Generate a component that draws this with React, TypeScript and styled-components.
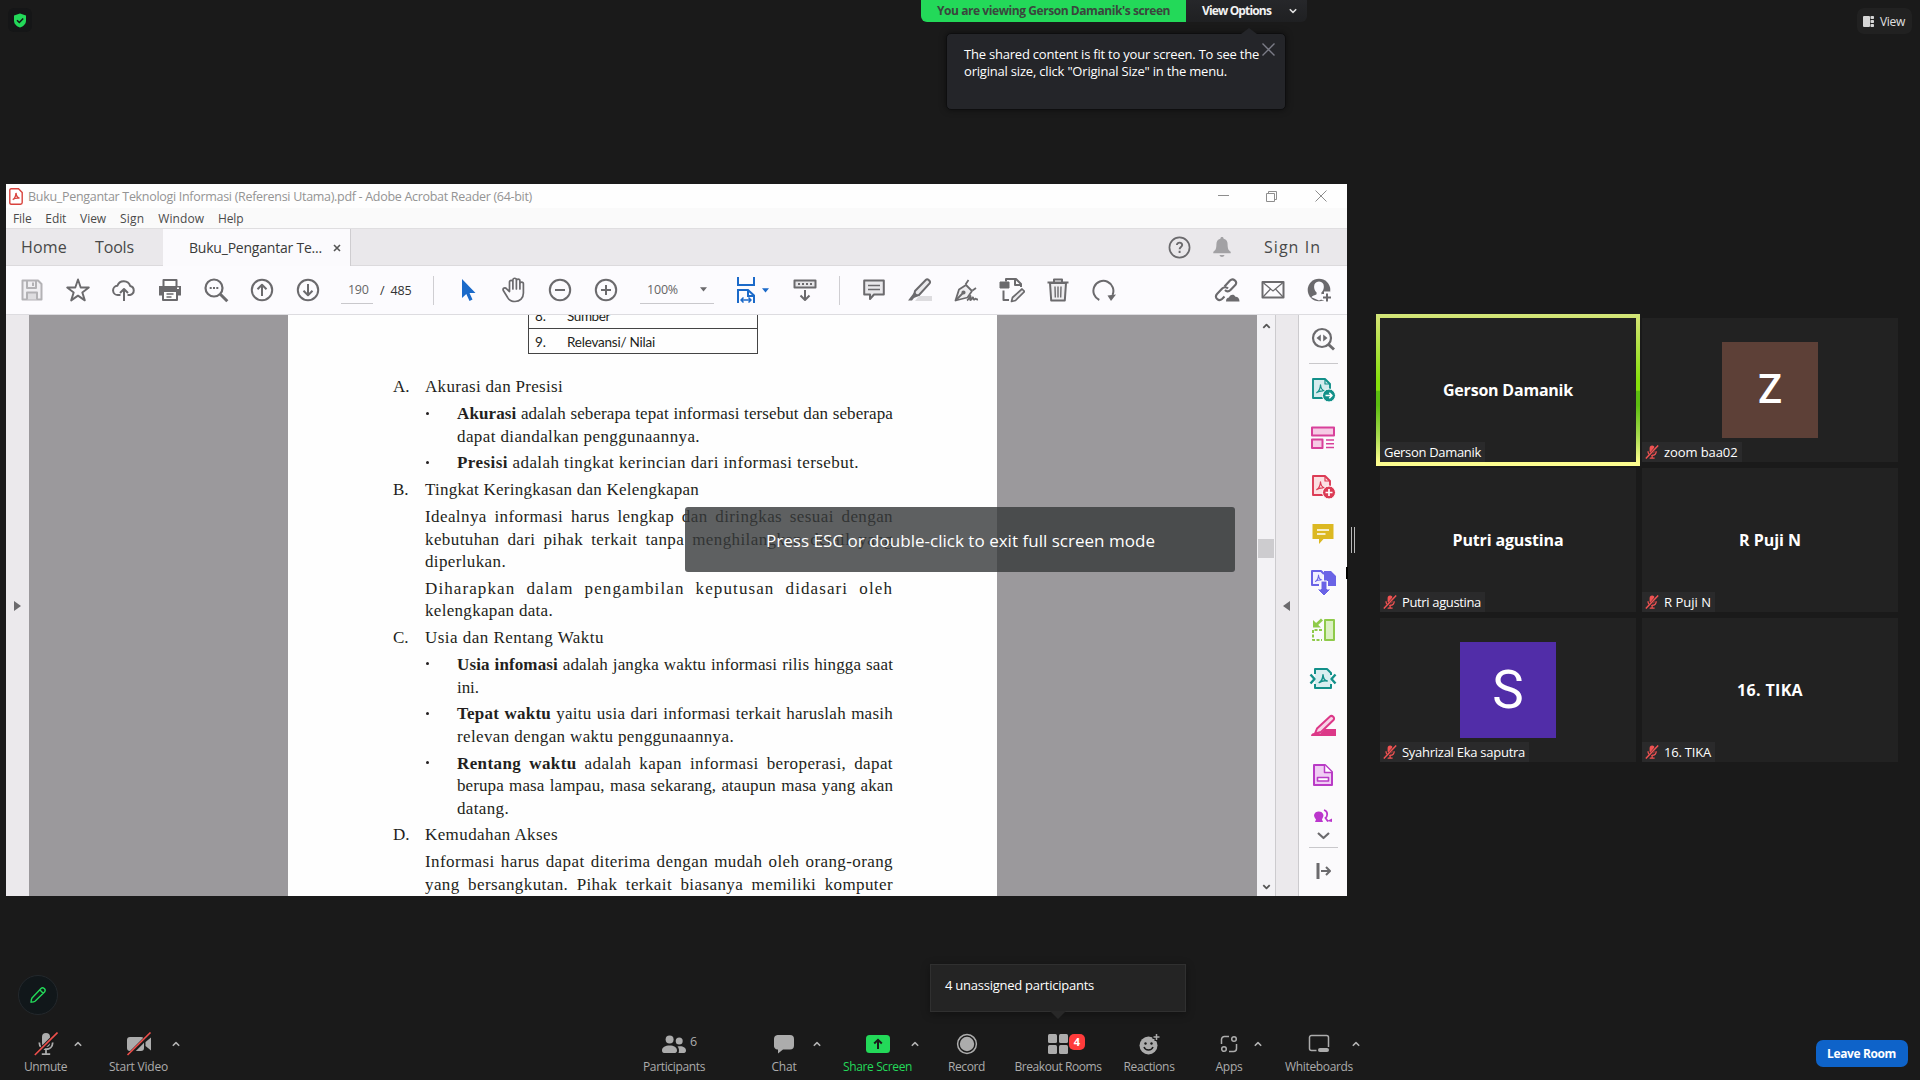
import React, { useLayoutEffect, useRef, useState } from "react";
import styled, { createGlobalStyle, css } from "styled-components";

const UI = `"Open Sans", "Noto Sans", sans-serif`;
const SERIF = `"Liberation Serif", serif`;

const Global = createGlobalStyle`
  *, *::before, *::after { box-sizing: border-box; }
  html, body { margin: 0; padding: 0; background: #1a1a1a; }
  body { font-family: ${UI}; overflow: hidden; }
  svg { display: block; flex: none; }
`;

/* ---------- text that settles to a given width ---------- */

const FitSpan = styled.span`
  display: inline-block;
  justify-self: start;
  white-space: nowrap;
`;

function Fit({ w, children }: { w: number; children: React.ReactNode }) {
  const ref = useRef<HTMLSpanElement>(null);
  const [spacing, setSpacing] = useState(0);
  useLayoutEffect(() => {
    const el = ref.current;
    if (!el) return;
    el.style.letterSpacing = "0px";
    const n = (el.textContent || "").length;
    setSpacing((w - el.getBoundingClientRect().width) / Math.max(1, n));
  }, [w]);
  return (
    <FitSpan ref={ref} style={{ letterSpacing: `${spacing}px` }}>
      {children}
    </FitSpan>
  );
}

/* ---------- page ---------- */

const Screen = styled.div`
  position: relative;
  width: 1920px;
  height: 1080px;
  overflow: hidden;
  background: #1a1a1a;
  display: grid;
  grid-template-rows: 184px 712px 184px;
`;

const TopArea = styled.header`
  display: flex;
  justify-content: space-between;
  padding: 8px;
`;

const ShieldBadge = styled.div`
  width: 24px;
  height: 24px;
  border-radius: 6px;
  background: #151617;
  display: grid;
  place-items: center;
`;

const ViewButton = styled.div`
  height: 26px;
  width: 55px;
  border-radius: 7px;
  background: #212121;
  color: #e0e0e0;
  font-size: 12px;
  display: flex;
  align-items: center;
  padding-left: 6px;
  gap: 6px;
`;

const Middle = styled.main`
  display: flex;
  padding-left: 6px;
`;

/* ---------- share banner ---------- */

const Banner = styled.div`
  position: absolute;
  left: 921px;
  top: 0;
  height: 22px;
  width: 386px;
  display: flex;
  border-radius: 0 0 6px 6px;
  overflow: hidden;
  font-size: 12px;
  font-weight: 700;
`;

const BannerName = styled.div`
  width: 265px;
  padding-bottom: 1px;
  background: #23d959;
  color: #3a463d;
  display: flex;
  justify-content: center;
  align-items: center;
`;

const BannerOptions = styled.div`
  flex: 1;
  display: flex;
  align-items: center;
  justify-content: space-between;
  padding: 0 10px 1px 16px;
  color: #f2f2f2;
  background: linear-gradient(#26272a, #1f2022);
`;

const HintBox = styled.div`
  position: absolute;
  left: 946px;
  top: 33px;
  width: 340px;
  height: 77px;
  padding: 12px 0 0 17px;
  border: 1px solid #0e0e0f;
  border-radius: 5px;
  background: #242529;
  color: #fff;
  font-size: 13px;
  line-height: 17px;
  box-shadow: 0 0 6px rgba(0, 0, 0, 0.5);
  &::before {
    content: "";
    position: absolute;
    left: 294px;
    top: -6px;
    border: 8px solid transparent;
    border-top: 0;
    border-bottom: 6px solid #242529;
  }
  & > svg {
    position: absolute;
    right: 10px;
    top: 9px;
  }
`;

/* ---------- acrobat window ---------- */

const Window = styled.section`
  width: 1341px;
  height: 712px;
  background: #fbfafd;
  display: grid;
  grid-template-rows: 24px 21px 37px 49px 581px;
`;

const TitleBar = styled.div`
  display: flex;
  align-items: center;
  background: #fefefe;
  color: #949494;
  font-size: 12.5px;
  padding: 0 20px 0 3px;
  gap: 5px;
`;

const Controls = styled.div`
  margin-left: auto;
  display: flex;
  align-items: center;
  gap: 37px;
`;

const MenuBar = styled.div`
  display: flex;
  align-items: center;
  background: #fafafa;
  border-bottom: 1px solid #dfdee0;
  color: #4a4a4a;
  font-size: 12px;
  padding-left: 7px;
  gap: 13.8px;
`;

const TabBar = styled.div`
  display: flex;
  background: #eae8eb;
  border-bottom: 1px solid #dcdadd;
  color: #484848;
  font-size: 16px;
`;

const TabHome = styled.div`
  width: 157px;
  padding-left: 15px;
  display: flex;
  align-items: center;
  gap: 28px;
`;

const DocTab = styled.div`
  width: 188px;
  margin-bottom: -1px;
  background: #fbfafd;
  border-right: 1px solid #cfcdd0;
  color: #3a3a3a;
  font-size: 14px;
  display: flex;
  align-items: center;
  padding: 0 9px 0 26px;
  justify-content: space-between;
`;

const TabRight = styled.div`
  margin-left: auto;
  display: flex;
  align-items: center;
  padding-right: 26px;
  & > svg { margin-right: 22px; }
  & > svg + svg { margin-right: 33px; }
`;

const ToolBar = styled.div`
  display: flex;
  align-items: center;
  background: #fcfbfe;
  border-bottom: 1px solid #dddce0;
  padding: 0 5px 0 3px;
`;

const Cell = styled.div`
  width: 46px;
  height: 46px;
  flex: none;
  display: grid;
  place-items: center;
`;

const Separator = styled.div<{ before: number; after: number }>`
  width: 1px;
  height: 29px;
  background: #cfced2;
  margin: 0 ${(p) => p.after}px 0 ${(p) => p.before}px;
`;

const PageBox = styled.div`
  width: 102px;
  display: flex;
  align-items: center;
  padding-left: 10px;
  font-size: 12.5px;
  color: #333;
`;

const FieldBox = styled.div<{ w: number }>`
  width: ${(p) => p.w}px;
  height: 28px;
  border-bottom: 1px solid #c9c8cc;
  display: flex;
  align-items: center;
  justify-content: space-between;
  padding: 0 7px;
  color: #666;
  font-size: 12.5px;
`;

const Slash = styled.span`
  margin: 0 6px 0 7px;
`;

const ZoomBox = styled.div`
  width: 94px;
  padding-left: 11px;
`;

const FitCell = styled.div`
  width: 59px;
  display: flex;
  align-items: center;
  gap: 7px;
  padding-left: 14px;
`;

const Spacer = styled.div`
  flex: 1;
`;

const Body = styled.div`
  display: flex;
  height: 581px;
  overflow: hidden;
`;

const NavStrip = styled.div`
  width: 23px;
  background: #ebe9ec;
  display: grid;
  place-items: center;
`;

const Canvas = styled.div`
  width: 1228px;
  background: #9b999c;
  display: flex;
  padding-left: 259px;
`;

const Paper = styled.article`
  width: 709px;
  height: 581px;
  overflow: hidden;
  background: #fefefe;
  color: #231f20;
  font-family: ${SERIF};
  font-size: 17px;
  line-height: 22.6px;
`;

const Table = styled.div`
  width: 230px;
  height: 39px;
  margin: 0 0 0 240px;
  border: 1px solid #444;
  border-top: 0;
  overflow: hidden;
  display: flex;
  flex-direction: column;
  justify-content: flex-end;
  font-family: Lato, sans-serif;
  font-size: 13.5px;
  line-height: 27px;
`;

const TableRow = styled.div<{ ruled?: boolean }>`
  flex: none;
  height: 25px;
  padding-left: 6px;
  display: grid;
  grid-template-columns: 32px 1fr;
  ${(p) => p.ruled && css`border-top: 1px solid #444;`}
`;

const Prose = styled.div`
  width: 500px;
  margin: 22.4px 0 0 105px;
`;

const Section = styled.div`
  display: grid;
  grid-template-columns: 32px 468px;
  height: 22.6px;
  margin-top: 4.15px;
`;

const Para = styled.div`
  margin: 4.15px 0 0 32px;
`;

const Bullet = styled.div`
  display: grid;
  grid-template-columns: 32px 436px;
  margin: 4.15px 0 0 32px;
`;

const Dot = styled.i`
  width: 3px;
  height: 3px;
  border-radius: 50%;
  background: #231f20;
  margin: 8.5px 0 0 1px;
`;

const Line = styled.div<{ ls: number }>`
  height: 22.6px;
  white-space: nowrap;
  text-align: justify;
  text-align-last: justify;
  letter-spacing: ${(p) => p.ls}px;
`;

const Plain = styled.div`
  height: 22.6px;
`;

const ScrollTrack = styled.div`
  width: 19px;
  background: #f3f2f5;
  border-right: 1px solid #cccbce;
  display: flex;
  flex-direction: column;
  align-items: center;
  padding: 8px 0 6px;
`;

const Thumb = styled.div`
  width: 16px;
  height: 19px;
  margin: 210px 0 auto;
  background: #cdcccf;
`;

const Collapse = styled.div`
  width: 23px;
  padding-right: 2px;
  background: #ebe9ec;
  border-right: 1px solid #cccbce;
  display: grid;
  place-items: center;
`;

const Rail = styled.aside`
  width: 48px;
  background: #fbfafc;
  display: flex;
  flex-direction: column;
  align-items: center;
`;

const RailCell = styled.div<{ h?: number }>`
  height: ${(p) => p.h ?? 48.2}px;
  flex: none;
  display: grid;
  place-items: center;
`;

const RailRule = styled.div<{ top?: number }>`
  width: 29px;
  height: 1px;
  flex: none;
  margin-top: ${(p) => p.top ?? 0}px;
  background: #c9c8cb;
`;

/* ---------- splitter ---------- */

const Splitter = styled.div`
  width: 29px;
  padding: 343px 0 0 4px;
  display: flex;
  gap: 2px;
`;

const Grip = styled.i`
  width: 1px;
  height: 26px;
  background: #b9b9b9;
`;

const PointerEdge = styled.i`
  position: absolute;
  left: 1346px;
  top: 567px;
  width: 2px;
  height: 12px;
  background: #000;
`;

/* ---------- gallery ---------- */

const Gallery = styled.section`
  display: grid;
  grid-template-columns: 256px 256px;
  grid-auto-rows: 144px;
  gap: 6px;
  padding: 134px 0 0 4px;
`;

const Tile = styled.div`
  position: relative;
  background: #222222;
  color: #fff;
  display: grid;
  place-items: center;
  font-size: 16px;
  font-weight: 700;
`;

const ActiveFrame = styled.div`
  position: absolute;
  inset: -4px;
  padding: 4px;
  background: linear-gradient(#d3e57a 0%, #cfe36b 5%, #86e00c 44%, #86e00c 50%, #5cbd10 51%, #5cbd10 60%, #a6d94d 80%, #fbfc8c 97%, #ffff93 100%);
  &::after {
    content: "";
    display: block;
    height: 100%;
    background: #222222;
  }
`;

const TileName = styled.div`
  position: relative;
`;

const Avatar = styled.div<{ tint: string; weight: number; size: number }>`
  width: 96px;
  height: 96px;
  background: ${(p) => p.tint};
  display: grid;
  place-items: center;
  font: ${(p) => p.weight} ${(p) => p.size}px/1 Roboto, sans-serif;
`;

const NameTag = styled.div`
  position: absolute;
  left: 0;
  bottom: 0;
  height: 20px;
  display: flex;
  align-items: center;
  gap: 5px;
  padding: 0 4px;
  background: #2a2a2b;
  font-size: 13px;
  font-weight: 400;
  & > svg { margin-left: -1px; }
`;

/* ---------- overlays ---------- */

const Toast = styled.div`
  position: absolute;
  left: 685px;
  top: 507px;
  width: 550px;
  height: 65px;
  padding: 1px 0 0 1px;
  border-radius: 3px;
  background: rgba(54, 56, 58, 0.8);
  color: #fff;
  font-size: 17px;
  display: flex;
  align-items: center;
  justify-content: center;
`;

const PencilButton = styled.div`
  position: absolute;
  left: 18px;
  top: 975px;
  width: 40px;
  height: 40px;
  border-radius: 50%;
  border: 1px solid #23282c;
  background: #11171a;
  display: grid;
  place-items: center;
`;

const RoomsHint = styled.div`
  position: absolute;
  left: 930px;
  top: 964px;
  width: 256px;
  height: 48px;
  background: #242424;
  border: 1px solid #303030;
  color: #fff;
  font-size: 13px;
  padding: 11px 0 0 14px;
  box-shadow: 0 2px 8px rgba(0, 0, 0, 0.35);
  &::after {
    content: "";
    position: absolute;
    left: 119px;
    top: 46px;
    border: 8px solid transparent;
    border-bottom: 0;
    border-top-color: #282828;
  }
`;

/* ---------- meeting bar ---------- */

const MeetingBar = styled.footer`
  display: flex;
  align-items: flex-start;
  padding: 136px 12px 0 16px;
`;

const Tool = styled.div<{ w: number; gap?: number; green?: boolean }>`
  position: relative;
  flex: none;
  width: ${(p) => p.w}px;
  margin-left: ${(p) => p.gap ?? 0}px;
  display: flex;
  flex-direction: column;
  align-items: center;
  color: ${(p) => (p.green ? "#23d959" : "#acacac")};
  font-size: 12px;
  line-height: 18px;
`;

const ToolIcon = styled.div`
  position: relative;
  height: 24px;
  display: grid;
  place-items: center;
  margin-bottom: 2px;
`;

const CaretSpot = styled.div<{ dx: number }>`
  position: absolute;
  left: calc(50% + ${(p) => p.dx - 4}px);
  top: 9px;
`;

const Count = styled.span`
  position: absolute;
  left: 28px;
  top: 1px;
  font-size: 12.5px;
`;

const Badge = styled.span`
  position: absolute;
  left: 21px;
  top: 2px;
  width: 16px;
  height: 16px;
  border-radius: 5px;
  background: #ff3b3b;
  color: #fff;
  font-size: 11px;
  font-weight: 700;
  line-height: 15px;
  text-align: center;
`;

const LeaveButton = styled.div`
  margin: 8px 0 0 auto;
  width: 92px;
  height: 27px;
  border-radius: 7px;
  background: #0e63c9;
  color: #fff;
  font-size: 12px;
  font-weight: 700;
  display: flex;
  align-items: center;
  justify-content: center;
  padding: 0 1px 1px 0;
`;

/* ---------- icons ---------- */

const G = "#6b6a6d";

type SvgProps = { w?: number; h?: number; box?: string; c?: string; sw?: number; children: React.ReactNode };
const Svg = ({ w = 24, h, box = "0 0 24 24", c = G, sw = 2, children }: SvgProps) => (
  <svg width={w} height={h ?? w} viewBox={box} fill="none" stroke={c} strokeWidth={sw} strokeLinecap="butt" strokeLinejoin="round">
    {children}
  </svg>
);

const Down = ({ c = G }: { c?: string }) => (
  <svg width="7" height="5" viewBox="0 0 7 5"><path d="M0 .3h7L3.5 4.6z" fill={c} /></svg>
);

const Chevron = ({ up, c = "#b5b5b5" }: { up?: boolean; c?: string }) => (
  <Svg w={8} h={6} box="0 0 8 6" c={c} sw={1.5}><path d={up ? "M.8 4.8 4 1.6l3.2 3.2" : "M.8 1.2 4 4.4l3.2-3.2"} /></Svg>
);

const MutedMic = () => (
  <svg width="14" height="14" viewBox="0 0 14 14">
    <rect x="4.6" y=".4" width="5" height="8.2" rx="2.5" fill="#f05252" />
    <path d="M3 6.2c0 5.4 8.2 5.4 8.2 0M7.1 10.4v2.4M4.6 13.2h5" stroke="#f05252" strokeWidth="1.3" fill="none" />
    <path d="M1.8 13.6 12.8.4" stroke="#2a2a2b" strokeWidth="2.6" />
    <path d="M.8 13.6 13.2.4" stroke="#f05252" strokeWidth="1.4" />
  </svg>
);

/* the three-lobed loop of the Acrobat mark */
const Tri = "M-3.8 3.6C-1.6 2.4-.2-.6 0-4.2.3-.8 1.6 1.6 4.2 2 1 1.6-2 2.2-3.8 3.6z";

const fileTools = [
  <Svg key="save" c="#b3b2b5" w={22} box="0 0 22 22"><path d="M2 1.5h15l3.500 3.500v15.500H1.500V1.500z" fill="#f0eff2" /><path d="M6 2v7h9V2M12 3.500v3.500" /><path d="M6 20.500v-7h10v7" fill="#dedde0" /></Svg>,
  <Svg key="star" w={26} box="0 0 26 26" sw={1.900}><path d="M13 2.500l2.700 8h8.100l-6.500 4.900 2.500 8L13 18.600l-6.800 4.800 2.500-8-6.500-4.900h8.100z" /></Svg>,
  <Svg key="cloud" w={24}><path d="M8.500 17H6a4.600 4.600 0 0 1-.6-9.200A6.700 6.700 0 0 1 18.200 8 4.600 4.600 0 0 1 18 17h-2.500M12 23V11.500M8 15l4-4 4 4" /></Svg>,
  <Svg key="print" w={24}><path d="M5.500 8V2h13v6" fill="#fff" /><path d="M1 8h22v9.500H1z" fill={G} stroke="none" /><path d="M5 13h14v9H5z" fill="#fff" /><path d="M8.500 16h7M8.500 19h5" strokeWidth="1.400" /><path d="M19 10.200h2" stroke="#fff" strokeWidth="1.500" /></Svg>,
  <Svg key="find" w={25} box="0 0 25 25" sw={2.200}><circle cx="10" cy="10" r="8.500" /><path d="M16.300 16.300l7 7" strokeWidth="3" /><path d="M5.700 10h2M9 10h2M12.300 10h2" /></Svg>,
  <Svg key="up" w={24}><circle cx="12" cy="12" r="10.200" /><path d="M12 18V7M7.500 11.300 12 6.800l4.500 4.500" /></Svg>,
  <Svg key="down" w={24}><circle cx="12" cy="12" r="10.200" /><path d="M12 6v11M7.500 12.700l4.500 4.500 4.500-4.500" /></Svg>,
];

const viewTools = [
  <svg key="cursor" width="16" height="24" viewBox="0 0 16 24"><path d="M2 1v19l4.300-4L9.500 23l3-1.400-3-6.600H15.500z" fill="#1b6ac9" /></svg>,
  <Svg key="hand" w={26} box="0 0 26 26" sw={1.700}><path d="M8.500 14.500V5a1.700 1.700 0 0 1 3.400 0v7V3a1.700 1.700 0 0 1 3.500 0v9V3.800a1.700 1.700 0 0 1 3.500 0V12 6.800a1.700 1.700 0 0 1 3.500 0V16c0 5-3.400 8.500-8.400 8.500-4 0-6-1.500-7.500-4.200L2.300 13.500c-1-2.300 1.800-3.500 3.300-1.600z" /></Svg>,
  <Svg key="minus" w={24}><circle cx="12" cy="12" r="10.200" /><path d="M7 12h10" /></Svg>,
  <Svg key="plus" w={24}><circle cx="12" cy="12" r="10.200" /><path d="M7 12h10M12 7v10" /></Svg>,
];

const FitIcon = () => (
  <Svg w={18} h={26} box="0 0 18 26" c="#1b6ac9">
    <path d="M1 0v8h16V0M1 26V13h10l6 5.500V26M11 13v6h6" strokeLinejoin="miter" />
    <path d="M4 23h10M6.500 20.500 4 23l2.500 2.500M11.500 20.500 14 23l-2.500 2.500" strokeWidth="1.500" />
  </Svg>
);

const Keyboard = () => (
  <Svg w={24} h={24}><path d="M1.500 2.500h21v7h-21z" fill="#e6e5e8" /><path d="M5 6h2M9 6h2M13 6h2M17 6h2" /><path d="M12 12v9M7.500 17.500 12 22l4.500-4.500" /></Svg>
);

const markupTools = [
  <Svg key="note" w={22} box="0 0 22 22"><path d="M1.200 1.500h19.600v14H11l-4 4.500v-4.500H1.200z" fill="#e9e8eb" /><path d="M5 6.500h12M5 10.500h12" strokeWidth="1.500" /></Svg>,
  <Svg key="hl" w={26} box="0 0 26 26"><path d="M12 19h13v5H8z" fill="#dddcdf" stroke="none" /><path d="M8 14 19 2.800c1.500-1.500 5.200 1.500 3.600 3.600L12 18l-5 .8z" fill="#e9e8eb" /><path d="M7.500 15l4 4-4.500 2-2 2.500H1z" fill={G} stroke="none" /></Svg>,
  <Svg key="pen" w={26} box="0 0 26 26" sw={1.800}><path d="M2.500 23.500 6 12.500l7-4.500 6 6-4.500 6.500z" fill="#eeedf0" /><path d="M2.500 23.500l7-7" /><circle cx="10.500" cy="15.500" r="1.200" fill={G} /><path d="M12.500 7.500 15.500 3M19.500 13.500 23 11" /><path d="M14 23.500c2-1 3-5 3.500-4.500s-1 4 0 4 2-3 2.500-2.500 0 2 .8 2.200 1.200-1.200 1.800-1 .8 1 2.400.8" /></Svg>,
  <Svg key="edit" w={26} box="0 0 26 26"><path d="M7 4.500V2h10l5 5v3M16 2v6h6M4.500 13.500V23H10" /><path d="M1 5h9v6H1z" fill={G} stroke={G} strokeWidth="1" /><path d="M12.500 24.500l1-4 9.500-8.500 2.500 2.500-9 9z" fill="#e9e8eb" strokeWidth="1.700" /></Svg>,
  <Svg key="trash" w={24}><path d="M1.500 4.500h21M8 4V1.500h8V4" /><path d="M4 5l1.200 17.500h13.600L20 5z" fill="#eeedf0" /><path d="M9 8.500l.3 11M12 8.500v11M15 8.500l-.3 11" strokeWidth="1.400" /></Svg>,
  <Svg key="rot" w={24}><path d="M7.300 22A10 10 0 1 1 20.500 17" /><path d="M15.500 17.500l8.500-1-5 6.500z" fill={G} stroke="none" /></Svg>,
];

const shareTools = [
  <Svg key="link" w={26} box="0 0 26 26" sw={2.100}><path d="M10.500 9.500l5.500-6c3-3 8 1 5.300 4.600L16.500 13c-2 2-4 1.600-5.500 0" /><path d="M14 11.500c-1.700-2-4.300-1.500-5.800 0L3 17c-3 3.500 1.700 8 5 5l2.500-2.500" /><path d="M12 24.500c0-3 1.500-4 3-4 .5-3 5-4.200 6.500-.8 2.500 0 4 1.500 4 4.800z" fill={G} stroke="none" /></Svg>,
  <Svg key="mail" w={24} h={20} box="0 0 24 20"><path d="M1.500 2h21v15.500h-21z" /><path d="M2 2.500l10 8.500 10-8.500M2 17l7.500-8M22 17l-7.500-8" strokeWidth="1.200" /></Svg>,
  <svg key="user" width="25" height="25" viewBox="0 0 25 25"><circle cx="12" cy="12" r="11.300" fill={G} /><path d="M12 3.500c6.500 0 5.700 8.700 2.400 11v1.800c1.500 1 4.600 1.200 5.200 3L12 22.600l-7.600-3.300c.6-1.800 3.700-2 5.200-3v-1.800C6.300 12.200 5.500 3.500 12 3.500z" fill="#fcfbfe" /><path d="M20 13.500v11M14.500 19h11" stroke="#fcfbfe" strokeWidth="6" /><path d="M20 15.500v8M16 19.500h8" stroke={G} strokeWidth="2" /></svg>,
];

const Doc = ({ c, f, children }: { c: string; f: string; children?: React.ReactNode }) => (
  <Svg w={26} box="0 0 26 26" c={c} sw={1.900}>
    <path d="M3 3h12l5 5v14H3z" fill={f} /><path d="M15 3v5h5" strokeWidth="1.200" />
    <path d={Tri} transform="translate(10.500 13)" strokeWidth="1.200" />
    {children}
  </Svg>
);

const railIcons = [
  <Doc key="exp" c="#13908a" f="#d5ecee"><circle cx="19" cy="19.500" r="6.500" fill="#13908a" stroke="#fff" strokeWidth="1" /><path d="M15.500 19.500h6M19.300 16.800l2.700 2.700-2.700 2.700" stroke="#fff" strokeWidth="1.600" /></Doc>,
  <Svg key="org" w={26} box="0 0 26 26" c="#d8409a"><path d="M2 2.500h22v8H2zM2 14.500h10.500v8.500H2z" fill="#f6cbe5" /><path d="M16 15h8M16 18.700h8M16 22.500h8" strokeWidth="1.400" /></Svg>,
  <Doc key="new" c="#dc3b55" f="#fbe0e2"><circle cx="19" cy="19.500" r="6.500" fill="#dc3b55" stroke="#fff" strokeWidth="1" /><path d="M15.500 19.500h7M19 16v7" stroke="#fff" strokeWidth="1.700" /></Doc>,
  <svg key="com" width="24" height="24" viewBox="0 0 24 24"><path d="M1.500 2h21v15H12.500L8 22v-5H1.500z" fill="#dcb822" /><path d="M6 8h12M6 12h8.500" stroke="#fff" strokeWidth="1.600" /></svg>,
  <Svg key="comb" w={27} box="0 0 27 27" c="#6a63e6"><path d="M9 16H2V2h9l3 3" fill="#f1f0ff" /><path d={Tri} transform="translate(8.500 9.500) scale(.8)" strokeWidth="1.300" /><path d="M14 2h7l5 5v10h-8v-5h-4z" fill="#6a63e6" stroke="none" /><path d="M11 12h6v8h4l-7 7-7-7h4z" fill="#6a63e6" stroke="#fff" strokeWidth="1" /></Svg>,
  <Svg key="orgp" w={26} box="0 0 26 26" c="#8fca4a"><path d="M15 3h9v20h-9z" fill="#dbf0c2" /><path d="M12 13H3v10h9" strokeDasharray="3 1.500" /><path d="M12 2.500 6 8" strokeWidth="3" /><path d="M3 3v7.500h8z" fill="#8fca4a" stroke="none" /></Svg>,
  <Svg key="comp" w={28} box="0 0 28 28" c="#13908a"><path d="M6 5h12l4 4v14H6z" fill="#d9eef0" stroke="none" /><path d="M6 9V4h12l4 4v2M22 19v4H6v-4" /><path d={Tri} transform="translate(14 14)" strokeWidth="1.500" /><path d="M1.500 9.500 5.500 14l-4 4.500M26.500 9.500 22.500 14l4 4.500" strokeWidth="2.400" /></Svg>,
  <Svg key="red" w={27} box="0 0 27 27" c="#dc3888"><path d="M7 15.500 20 3.500c2-1.800 5.500 1.500 3.500 3.500L11 19l-6 1.500z" fill="#f8d3e6" /><path d="M1 23c0-2.500 2-3 5-3.500l4.500 1L15 16h11v7z" fill="#dc3888" stroke="none" /></Svg>,
  <Svg key="form" w={24} box="0 0 24 24" c="#b93bc6"><path d="M3 2h11l7 7v13H3z" fill="#f0cdf4" /><path d="M13.500 2v7.500H21" fill="#fff" strokeWidth="1.500" /><path d="M6.500 14.500h11v3.500h-11z" fill="#fff" strokeWidth="1.600" /></Svg>,
];

const stroke = { fill: "none", stroke: "#acacac", strokeWidth: 1.5 } as const;

const MicOff = () => (
  <svg width="24" height="24" viewBox="0 0 24 24">
    <rect x="8" y="1" width="8" height="14" rx="4" fill="#acacac" />
    <path d="M5.300 10.500c0 9 13.400 9 13.400 0M12 17.500v4M7.800 22.200h8.400" {...stroke} strokeWidth="1.800" />
    <path d="M1.500 23 23 1.500" stroke="#1a1a1a" strokeWidth="4" />
    <path d="M.8 23 23.500.5" stroke="#ee4f4b" strokeWidth="1.600" />
  </svg>
);
const VideoOff = () => (
  <svg width="26" height="24" viewBox="0 0 26 24">
    <rect x="1" y="5" width="17" height="14" rx="3" fill="#acacac" /><path d="M19.500 10 25 5.500v13L19.500 14z" fill="#acacac" />
    <path d="M2.500 23.500 25 1" stroke="#1a1a1a" strokeWidth="4" />
    <path d="M1.500 23 24.500.5" stroke="#ee4f4b" strokeWidth="1.600" />
  </svg>
);
const People = () => (
  <svg width="24" height="24" viewBox="0 0 24 24" fill="#acacac">
    <circle cx="7.600" cy="7.500" r="4" /><circle cx="17.200" cy="9" r="3.500" />
    <path d="M0 18.500c0-3.200 3.400-5 7.600-5s7.400 1.800 7.400 5c0 1.600-.8 2.500-2 2.500H2c-1.200 0-2-.9-2-2.500zM15.500 14.500c5-1 8.500 1 8.500 4 0 1.600-.8 2.500-2 2.500h-5.500c1-2.500.5-5-1-6.500z" />
  </svg>
);
const ChatIcon = () => (
  <svg width="22" height="22" viewBox="0 0 22 22"><path d="M4.500 2h12.500a4 4 0 0 1 4 4v6.500a4 4 0 0 1-4 4H10l-5 4v-4H4.500a3.500 3.500 0 0 1-3.500-4V6a4 4 0 0 1 3.500-4z" fill="#acacac" /></svg>
);
const ShareIcon = () => (
  <svg width="24" height="20" viewBox="0 0 24 20"><rect y="1" width="24" height="18" rx="3.500" fill="#23d959" /><path d="M12 15V6.500M8.200 9.500 12 5.800l3.800 3.700" fill="none" stroke="#1a1a1a" strokeWidth="2" /></svg>
);
const RecordIcon = () => (
  <svg width="22" height="22" viewBox="0 0 22 22"><circle cx="11" cy="11" r="9.400" {...stroke} /><circle cx="11" cy="11" r="7.200" fill="#acacac" /></svg>
);
const RoomsIcon = () => (
  <svg width="20" height="20" viewBox="0 0 20 20" fill="#acacac"><rect width="9" height="9" rx="1.500" /><rect x="11" width="9" height="9" rx="1.500" /><rect y="11" width="9" height="9" rx="1.500" /><rect x="11" y="11" width="9" height="9" rx="1.500" /></svg>
);
const ReactIcon = () => (
  <svg width="24" height="24" viewBox="0 0 24 24"><circle cx="11.500" cy="13.500" r="9" fill="#acacac" /><circle cx="8.500" cy="11.500" r="1.200" fill="#1a1a1a" /><circle cx="14.500" cy="11.500" r="1.200" fill="#1a1a1a" /><path d="M7 15c1.500 4 7.500 4 9 0" fill="none" stroke="#1a1a1a" strokeWidth="1.500" /><path d="M19.500 1v8M15.500 5h8" stroke="#1a1a1a" strokeWidth="4" /><path d="M19.500 2v6M16.500 5h6" stroke="#acacac" strokeWidth="1.500" /></svg>
);
const AppsIcon = () => (
  <svg width="18" height="18" viewBox="0 0 18 18" {...stroke}><circle cx="14" cy="4" r="2.300" /><circle cx="4" cy="14" r="2.300" /><path d="M9 1.500H4.500a3 3 0 0 0-3 3V9M9 16.500h4.500a3 3 0 0 0 3-3V9" /></svg>
);
const BoardIcon = () => (
  <svg width="22" height="20" viewBox="0 0 22 20"><path d="M8.500 16.500h-5a2 2 0 0 1-2-2V3.500a2 2 0 0 1 2-2h15a2 2 0 0 1 2 2v9.500" {...stroke} /><rect x="10" y="14" width="11" height="4" rx="2" fill="#acacac" /></svg>
);

/* ---------- data ---------- */

const menus: [string, number][] = [["File", 18.5], ["Edit", 21], ["View", 26], ["Sign", 24.5], ["Window", 46], ["Help", 25.5]];

type Person = { name: string; w: number; tag: number; muted: boolean; avatar?: { letter: string; tint: string; weight: number; size: number } };
const people: Person[] = [
  { name: "Gerson Damanik", w: 130, tag: 97, muted: false },
  { name: "zoom baa02", w: 0, tag: 73.5, muted: true, avatar: { letter: "Z", tint: "#5d4037", weight: 500, size: 40 } },
  { name: "Putri agustina", w: 111, tag: 79, muted: true },
  { name: "R Puji N", w: 62, tag: 47, muted: true },
  { name: "Syahrizal Eka saputra", w: 0, tag: 123, muted: true, avatar: { letter: "S", tint: "#512da8", weight: 400, size: 53 } },
  { name: "16. TIKA", w: 66, tag: 47, muted: true },
];

/* ---------- document ---------- */

const Heading = ({ mark, w, children }: { mark: string; w: number; children: string }) => (
  <Section><span>{mark}</span><Plain><Fit w={w}>{children}</Fit></Plain></Section>
);

const Document = () => (
  <Paper>
    <Table>
      <TableRow><span>8.</span><span><Fit w={43}>Sumber</Fit></span></TableRow>
      <TableRow ruled><span>9.</span><span><Fit w={88}>Relevansi/ Nilai</Fit></span></TableRow>
    </Table>
    <Prose>
      <Heading mark="A." w={138}>Akurasi dan Presisi</Heading>
      <Bullet><Dot /><div>
        <Line ls={0.1}><b>Akurasi</b> adalah seberapa tepat informasi tersebut dan seberapa</Line>
        <Plain><Fit w={243}>dapat diandalkan penggunaannya.</Fit></Plain>
      </div></Bullet>
      <Bullet><Dot /><Plain><Fit w={402}><b>Presisi</b> adalah tingkat kerincian dari informasi tersebut.</Fit></Plain></Bullet>
      <Heading mark="B." w={274}>Tingkat Keringkasan dan Kelengkapan</Heading>
      <Para>
        <Line ls={0.4}>Idealnya informasi harus lengkap dan diringkas sesuai dengan</Line>
        <Line ls={0.4}>kebutuhan dari pihak terkait tanpa menghilangkan detail yang</Line>
        <Plain><Fit w={81}>diperlukan.</Fit></Plain>
      </Para>
      <Para>
        <Line ls={1.1}>Diharapkan dalam pengambilan keputusan didasari oleh</Line>
        <Plain><Fit w={128}>kelengkapan data.</Fit></Plain>
      </Para>
      <Heading mark="C." w={179}>Usia dan Rentang Waktu</Heading>
      <Bullet><Dot /><div>
        <Line ls={0.12}><b>Usia infomasi</b> adalah jangka waktu informasi rilis hingga saat</Line>
        <Plain><Fit w={22}>ini.</Fit></Plain>
      </div></Bullet>
      <Bullet><Dot /><div>
        <Line ls={0.25}><b>Tepat waktu</b> yaitu usia dari informasi terkait haruslah masih</Line>
        <Plain><Fit w={277}>relevan dengan waktu penggunaannya.</Fit></Plain>
      </div></Bullet>
      <Bullet><Dot /><div>
        <Line ls={0.4}><b>Rentang waktu</b> adalah kapan informasi beroperasi, dapat</Line>
        <Line ls={0.1}>berupa masa lampau, masa sekarang, ataupun masa yang akan</Line>
        <Plain><Fit w={52}>datang.</Fit></Plain>
      </div></Bullet>
      <Heading mark="D." w={133}>Kemudahan Akses</Heading>
      <Para>
        <Line ls={0.4}>Informasi harus dapat diterima dengan mudah oleh orang-orang</Line>
        <Line ls={0.4}>yang bersangkutan. Pihak terkait biasanya memiliki komputer</Line>
      </Para>
    </Prose>
  </Paper>
);

/* ---------- app ---------- */

export default function App() {
  return (
    <Screen>
      <Global />
      <TopArea>
        <ShieldBadge>
          <svg width="14" height="15" viewBox="0 0 14 15"><path d="M7 .5 13 2.500v5c0 3.500-2.500 5.800-6 7-3.500-1.200-6-3.500-6-7v-5z" fill="#23d959" /><path d="M4 7.300l2.300 2.200L10.200 5.500" fill="none" stroke="#151617" strokeWidth="1.500" /></svg>
        </ShieldBadge>
        <ViewButton>
          <svg width="11" height="11" viewBox="0 0 11 11" fill="#d6d6d6"><rect width="7" height="11" rx="1" /><rect x="7.500" width="3.500" height="3" rx=".8" /><rect x="7.500" y="4" width="3.500" height="3" rx=".8" /><rect x="7.500" y="8" width="3.500" height="3" rx=".8" /></svg>
          <Fit w={25}>View</Fit>
        </ViewButton>
      </TopArea>

      <Middle>
        <Window>
          <TitleBar>
            <svg width="14" height="17" viewBox="0 0 14 17"><path d="M2 .8h7.500l3.700 3.700v10a1.700 1.700 0 0 1-1.700 1.700H2A1.500 1.500 0 0 1 .8 14.500v-12A1.500 1.500 0 0 1 2 .8z" fill="#fff" stroke="#d8423c" strokeWidth="1.400" /><path d={Tri} transform="translate(7 8.500) scale(.85)" fill="none" stroke="#d8423c" strokeWidth="1.600" /></svg>
            <Fit w={504}>Buku_Pengantar Teknologi Informasi (Referensi Utama).pdf - Adobe Acrobat Reader (64-bit)</Fit>
            <Controls>
              <Svg w={11} h={12} box="0 0 11 12" c="#8d8d8d" sw={1}><path d="M0 5.500h11" /></Svg>
              <Svg w={12} h={12} box="0 0 12 12" c="#8d8d8d" sw={1}><path d="M.5 3.500h8v8h-8zM2.500 3.500v-2h8v8h-2" /></Svg>
              <Svg w={12} h={12} box="0 0 12 12" c="#8d8d8d" sw={1}><path d="M.5.5l11 11M11.500.5l-11 11" /></Svg>
            </Controls>
          </TitleBar>
          <MenuBar>{menus.map(([m, w]) => <Fit key={m} w={w}>{m}</Fit>)}</MenuBar>
          <TabBar>
            <TabHome><Fit w={46}>Home</Fit><Fit w={39}>Tools</Fit></TabHome>
            <DocTab>
              <Fit w={133}>Buku_Pengantar Te...</Fit>
              <Svg w={8} box="0 0 8 8" c="#555" sw={1.6}><path d="M1 1l6 6M7 1 1 7" /></Svg>
            </DocTab>
            <TabRight>
              <Svg w={23} c={G} sw={1.8}><circle cx="12" cy="12" r="10.500" /><path d="M9.300 9.500c0-3.500 5.500-3.300 5.500 0 0 2-2.700 2-2.700 4.300M12.100 15.500v2.200" strokeWidth="2" /></Svg>
              <svg width="18" height="20" viewBox="0 0 18 20" fill="#a2a1a4"><path d="M9 0c1 0 1.600.7 1.600 1.700 3 .8 4 3 4 5.500 0 4.500.9 6 3.100 7.600v1.400H.3v-1.400C2.500 13.200 3.400 11.700 3.400 7.200c0-2.500 1-4.700 4-5.500C7.400.7 8 0 9 0zM6.500 18h5c-.5 2.500-4.500 2.500-5 0z" /></svg>
              <Fit w={57}>Sign In</Fit>
            </TabRight>
          </TabBar>
          <ToolBar>
            {fileTools.map((icon, i) => <Cell key={i}>{icon}</Cell>)}
            <PageBox>
              <FieldBox w={32}><Fit w={20.5}>190</Fit></FieldBox>
              <Slash>/</Slash>
              <Fit w={21}>485</Fit>
            </PageBox>
            <Separator before={0} after={11} />
            {viewTools.map((icon, i) => <Cell key={i}>{icon}</Cell>)}
            <ZoomBox><FieldBox w={74}><Fit w={31}>100%</Fit><Down /></FieldBox></ZoomBox>
            <FitCell><FitIcon /><Down c="#1b6ac9" /></FitCell>
            <Cell><Keyboard /></Cell>
            <Separator before={11} after={11} />
            {markupTools.map((icon, i) => <Cell key={i}>{icon}</Cell>)}
            <Spacer />
            {shareTools.map((icon, i) => <Cell key={i}>{icon}</Cell>)}
          </ToolBar>
          <Body>
            <NavStrip><svg width="7" height="10" viewBox="0 0 7 10"><path d="M0 0v10l7-5z" fill={G} /></svg></NavStrip>
            <Canvas><Document /></Canvas>
            <ScrollTrack>
              <Svg w={9} h={6} box="0 0 8 6" c="#555" sw={1.8}><path d="M.8 4.800 4 1.600l3.200 3.200" /></Svg>
              <Thumb />
              <Svg w={9} h={6} box="0 0 8 6" c="#555" sw={1.8}><path d="M.8 1.200 4 4.400l3.200-3.200" /></Svg>
            </ScrollTrack>
            <Collapse><svg width="7" height="10" viewBox="0 0 7 10"><path d="M7 0v10L0 5z" fill={G} /></svg></Collapse>
            <Rail>
              <RailCell h={48}>
                <Svg w={24} sw={2.2}><circle cx="11" cy="11" r="9" /><path d="M17 17l6 5.500" strokeWidth="3" /><path d="M9.800 7.500v7L5.500 11zM12.200 7.500v7l4.300-3.500z" fill={G} stroke="none" /></Svg>
              </RailCell>
              <RailRule />
              {railIcons.map((icon, i) => <RailCell key={i} h={i === 0 ? 49.6 : undefined}>{icon}</RailCell>)}
              <RailCell h={33}>
                <svg width="18" height="13" viewBox="0 0 18 13" fill="#bb36cc"><path d="M0 6a5 5 0 0 1 9.500 0c0 2.500-1.300 3.500-1.500 4.500l1 2.500H1l1-2.500C1.500 9.500 0 8.500 0 6z" /><path d="M10 1c5 1.500 3 7 1.500 8l2.500 3.500" fill="none" stroke="#bb36cc" strokeWidth="1.800" /><path d="M13 12l5-2.500V13z" /></svg>
              </RailCell>
              <RailCell h={8}><Svg w={13} h={8} box="0 0 13 8" sw={2.2}><path d="M1 1l5.500 5L12 1" /></Svg></RailCell>
              <RailRule top={7} />
              <RailCell h={46}><Svg w={16} h={18} box="0 0 16 18" sw={2}><path d="M3 1v16" strokeWidth="3" /><path d="M6 9h8.500M11 5l4 4-4 4" /></Svg></RailCell>
            </Rail>
          </Body>
        </Window>

        <Splitter><Grip /><Grip /></Splitter>

        <Gallery>
          {people.map((p, i) => (
            <Tile key={p.name}>
              {i === 0 && <ActiveFrame />}
              {p.avatar
                ? <Avatar tint={p.avatar.tint} weight={p.avatar.weight} size={p.avatar.size}>{p.avatar.letter}</Avatar>
                : <TileName><Fit w={p.w}>{p.name}</Fit></TileName>}
              <NameTag>{p.muted && <MutedMic />}<Fit w={p.tag}>{p.name}</Fit></NameTag>
            </Tile>
          ))}
        </Gallery>
      </Middle>

      <MeetingBar>
        <Tool w={59}><ToolIcon><MicOff /></ToolIcon><Fit w={43}>Unmute</Fit><CaretSpot dx={32.5}><Chevron up /></CaretSpot></Tool>
        <Tool w={75} gap={26}><ToolIcon><VideoOff /></ToolIcon><Fit w={59}>Start Video</Fit><CaretSpot dx={37.5}><Chevron up /></CaretSpot></Tool>
        <Tool w={80} gap={458}><ToolIcon><People /><Count>6</Count></ToolIcon><Fit w={62}>Participants</Fit></Tool>
        <Tool w={60} gap={40}><ToolIcon><ChatIcon /></ToolIcon><Fit w={25}>Chat</Fit><CaretSpot dx={33}><Chevron up /></CaretSpot></Tool>
        <Tool w={79} gap={24} green><ToolIcon><ShareIcon /></ToolIcon><Fit w={69}>Share Screen</Fit><CaretSpot dx={37}><Chevron up /></CaretSpot></Tool>
        <Tool w={73} gap={13}><ToolIcon><RecordIcon /></ToolIcon><Fit w={37}>Record</Fit></Tool>
        <Tool w={99} gap={5.5}><ToolIcon><RoomsIcon /><Badge>4</Badge></ToolIcon><Fit w={87}>Breakout Rooms</Fit></Tool>
        <Tool w={71} gap={6}><ToolIcon><ReactIcon /></ToolIcon><Fit w={51}>Reactions</Fit></Tool>
        <Tool w={40} gap={24.5}><ToolIcon><AppsIcon /></ToolIcon><Fit w={27}>Apps</Fit><CaretSpot dx={28.5}><Chevron up /></CaretSpot></Tool>
        <Tool w={80} gap={30}><ToolIcon><BoardIcon /></ToolIcon><Fit w={68}>Whiteboards</Fit><CaretSpot dx={37}><Chevron up /></CaretSpot></Tool>
        <LeaveButton><Fit w={69}>Leave Room</Fit></LeaveButton>
      </MeetingBar>

      <Banner>
        <BannerName><Fit w={233}>You are viewing Gerson Damanik's screen</Fit></BannerName>
        <BannerOptions><Fit w={69}>View Options</Fit><Chevron c="#e0e0e0" /></BannerOptions>
      </Banner>
      <HintBox>
        <Fit w={295}>The shared content is fit to your screen. To see the</Fit>
        <Fit w={263}>original size, click "Original Size" in the menu.</Fit>
        <Svg w={13} box="0 0 13 13" c="#7b7c87" sw={1.4}><path d="M.5.5l12 12M12.500.5l-12 12" /></Svg>
      </HintBox>
      <PointerEdge />
      <Toast><Fit w={389}>Press ESC or double-click to exit full screen mode</Fit></Toast>
      <PencilButton>
        <Svg w={18} box="0 0 18 18" c="#23d959" sw={1.4}><path d="M2 16.200c.2-2 .3-3.200 1-4.200L12 2.500c2-2 5.500 1 3.500 3.500L6 15.200c-1 .7-2.300.8-4 1zM11 4l3.200 3.200" /></Svg>
      </PencilButton>
      <RoomsHint><Fit w={149}>4 unassigned participants</Fit></RoomsHint>
    </Screen>
  );
}
